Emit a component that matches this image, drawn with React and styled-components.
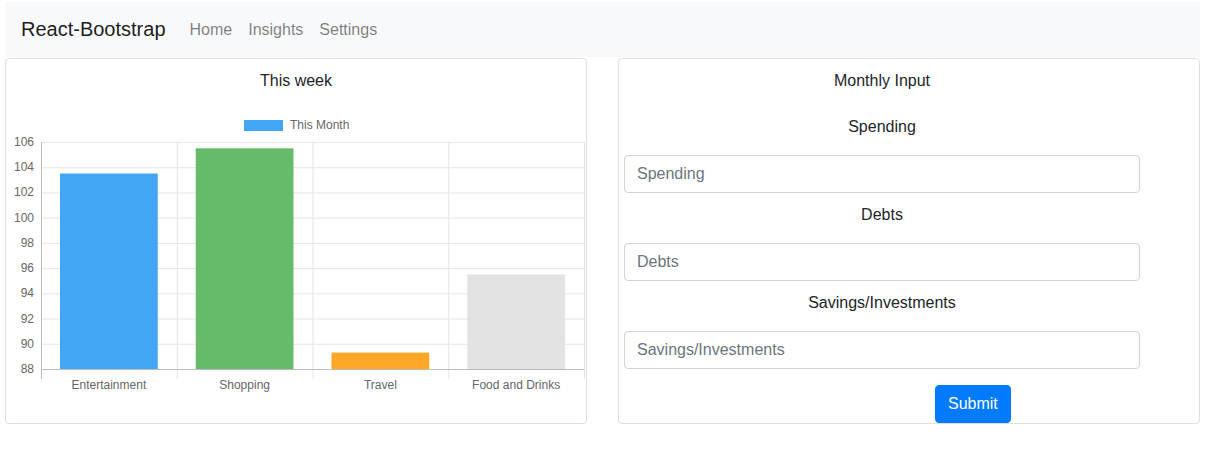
import React from 'react'
import styled, { createGlobalStyle } from 'styled-components'

const GlobalStyle = createGlobalStyle`
  body {
    margin: 0;
    font-family: "Liberation Sans", Arial, sans-serif;
    color: #212529;
    background: #fff;
  }
  * { box-sizing: border-box; }
`

const Page = styled.div`
  padding: 2px 12px 0 5px;
`

const Navbar = styled.nav`
  display: flex;
  align-items: center;
  height: 55px;
  padding: 0 16px;
  background: #f8f9fa;
`

const Brand = styled.a`
  font-size: 20px;
  color: rgba(0, 0, 0, 0.9);
  margin-right: 16px;
  text-decoration: none;
`

const NavLink = styled.a`
  font-size: 16px;
  color: rgba(0, 0, 0, 0.5);
  padding: 0 8px;
  text-decoration: none;
`

const Cards = styled.div`
  display: grid;
  grid-template-columns: 1fr 1fr;
  column-gap: 31px;
  margin-top: 1px;
`

const Card = styled.div`
  border: 1px solid rgba(0, 0, 0, 0.125);
  border-radius: 4px;
  padding: 10px 0 0;
  display: flex;
  flex-direction: column;
`

const CardTitle = styled.div`
  font-size: 16px;
  line-height: 24px;
  text-align: center;
  margin-bottom: ${p => p.$gap || 0}px;
`

const Form = styled.form`
  width: 516px;
  margin-left: 5px;
  display: flex;
  flex-direction: column;
`

const Group = styled.div`
  display: flex;
  flex-direction: column;
  margin-bottom: 10px;
`

const Label = styled.label`
  font-size: 16px;
  line-height: 24px;
  text-align: center;
  margin-bottom: 16px;
`

const Input = styled.input`
  height: 38px;
  padding: 6px 12px;
  font-family: inherit;
  font-size: 16px;
  color: #495057;
  border: 1px solid #ced4da;
  border-radius: 4px;
  &::placeholder { color: #6c757d; }
`

const SubmitButton = styled.button`
  align-self: flex-start;
  margin-left: 311px;
  margin-top: 6px;
  height: 38px;
  padding: 0 12px;
  font-family: inherit;
  font-size: 16px;
  color: #fff;
  background: #007bff;
  border: 1px solid #007bff;
  border-radius: 4px;
`

const ChartSvg = styled.svg`
  display: block;
  margin-top: -1px;
`

const data = [
  { label: 'Entertainment', value: 103.5, color: '#42A5F5' },
  { label: 'Shopping', value: 105.5, color: '#66BB6A' },
  { label: 'Travel', value: 89.3, color: '#FFA726' },
  { label: 'Food and Drinks', value: 95.5, color: '#E3E3E3' },
]

const BarChart = () => {
  const left = 35
  const right = 578
  const top = 50
  const bottom = 277
  const min = 88
  const max = 106
  const yOf = v => bottom - ((v - min) / (max - min)) * (bottom - top)
  const ticks = []
  for (let v = min; v <= max; v += 2) ticks.push(v)
  const cat = (right - left) / data.length
  const barW = cat * 0.72
  return (
    <ChartSvg width="580" height="310" viewBox="0 0 580 310">
      <rect x="238" y="28" width="39" height="11" fill="#42A5F5" />
      <text x="284" y="37" fontSize="12" fill="#666" fontFamily="Liberation Sans, Arial, sans-serif">This Month</text>
      {ticks.map(v => (
        <g key={v}>
          <line x1={left} x2={right} y1={yOf(v) + 0.5} y2={yOf(v) + 0.5} stroke="#e5e5e5" />
          <text x="28" y={yOf(v) + 4} fontSize="12" fill="#666" textAnchor="end" fontFamily="Liberation Sans, Arial, sans-serif">{v}</text>
        </g>
      ))}
      {data.map((d, i) => (
        <line key={d.label} x1={left + cat * (i + 1) + 0.5} x2={left + cat * (i + 1) + 0.5} y1={top} y2={bottom + 10} stroke="#e5e5e5" />
      ))}
      {data.map((d, i) => {
        const cx = left + cat * i + cat / 2
        const y = yOf(d.value)
        return (
          <g key={d.label}>
            <rect x={cx - barW / 2} y={y} width={barW} height={bottom - y} fill={d.color} />
            <text x={cx} y="297" fontSize="12" fill="#666" textAnchor="middle" fontFamily="Liberation Sans, Arial, sans-serif">{d.label}</text>
          </g>
        )
      })}
      <line x1={left + 0.5} x2={left + 0.5} y1={top} y2={bottom + 10} stroke="#bdbdbd" />
      <line x1={left} x2={right} y1={bottom + 0.5} y2={bottom + 0.5} stroke="#bdbdbd" />
    </ChartSvg>
  )
}

const fields = ['Spending', 'Debts', 'Savings/Investments']

export default function App() {
  return (
    <>
      <GlobalStyle />
      <Page>
        <Navbar>
          <Brand href="#">React-Bootstrap</Brand>
          <NavLink href="#">Home</NavLink>
          <NavLink href="#">Insights</NavLink>
          <NavLink href="#">Settings</NavLink>
        </Navbar>
        <Cards>
          <Card>
            <CardTitle>This week</CardTitle>
            <BarChart />
          </Card>
          <Card>
            <Form onSubmit={e => e.preventDefault()}>
              <CardTitle $gap={22}>Monthly Input</CardTitle>
              {fields.map(f => (
                <Group key={f}>
                  <Label>{f}</Label>
                  <Input placeholder={f} />
                </Group>
              ))}
              <SubmitButton type="submit">Submit</SubmitButton>
            </Form>
          </Card>
        </Cards>
      </Page>
    </>
  )
}
